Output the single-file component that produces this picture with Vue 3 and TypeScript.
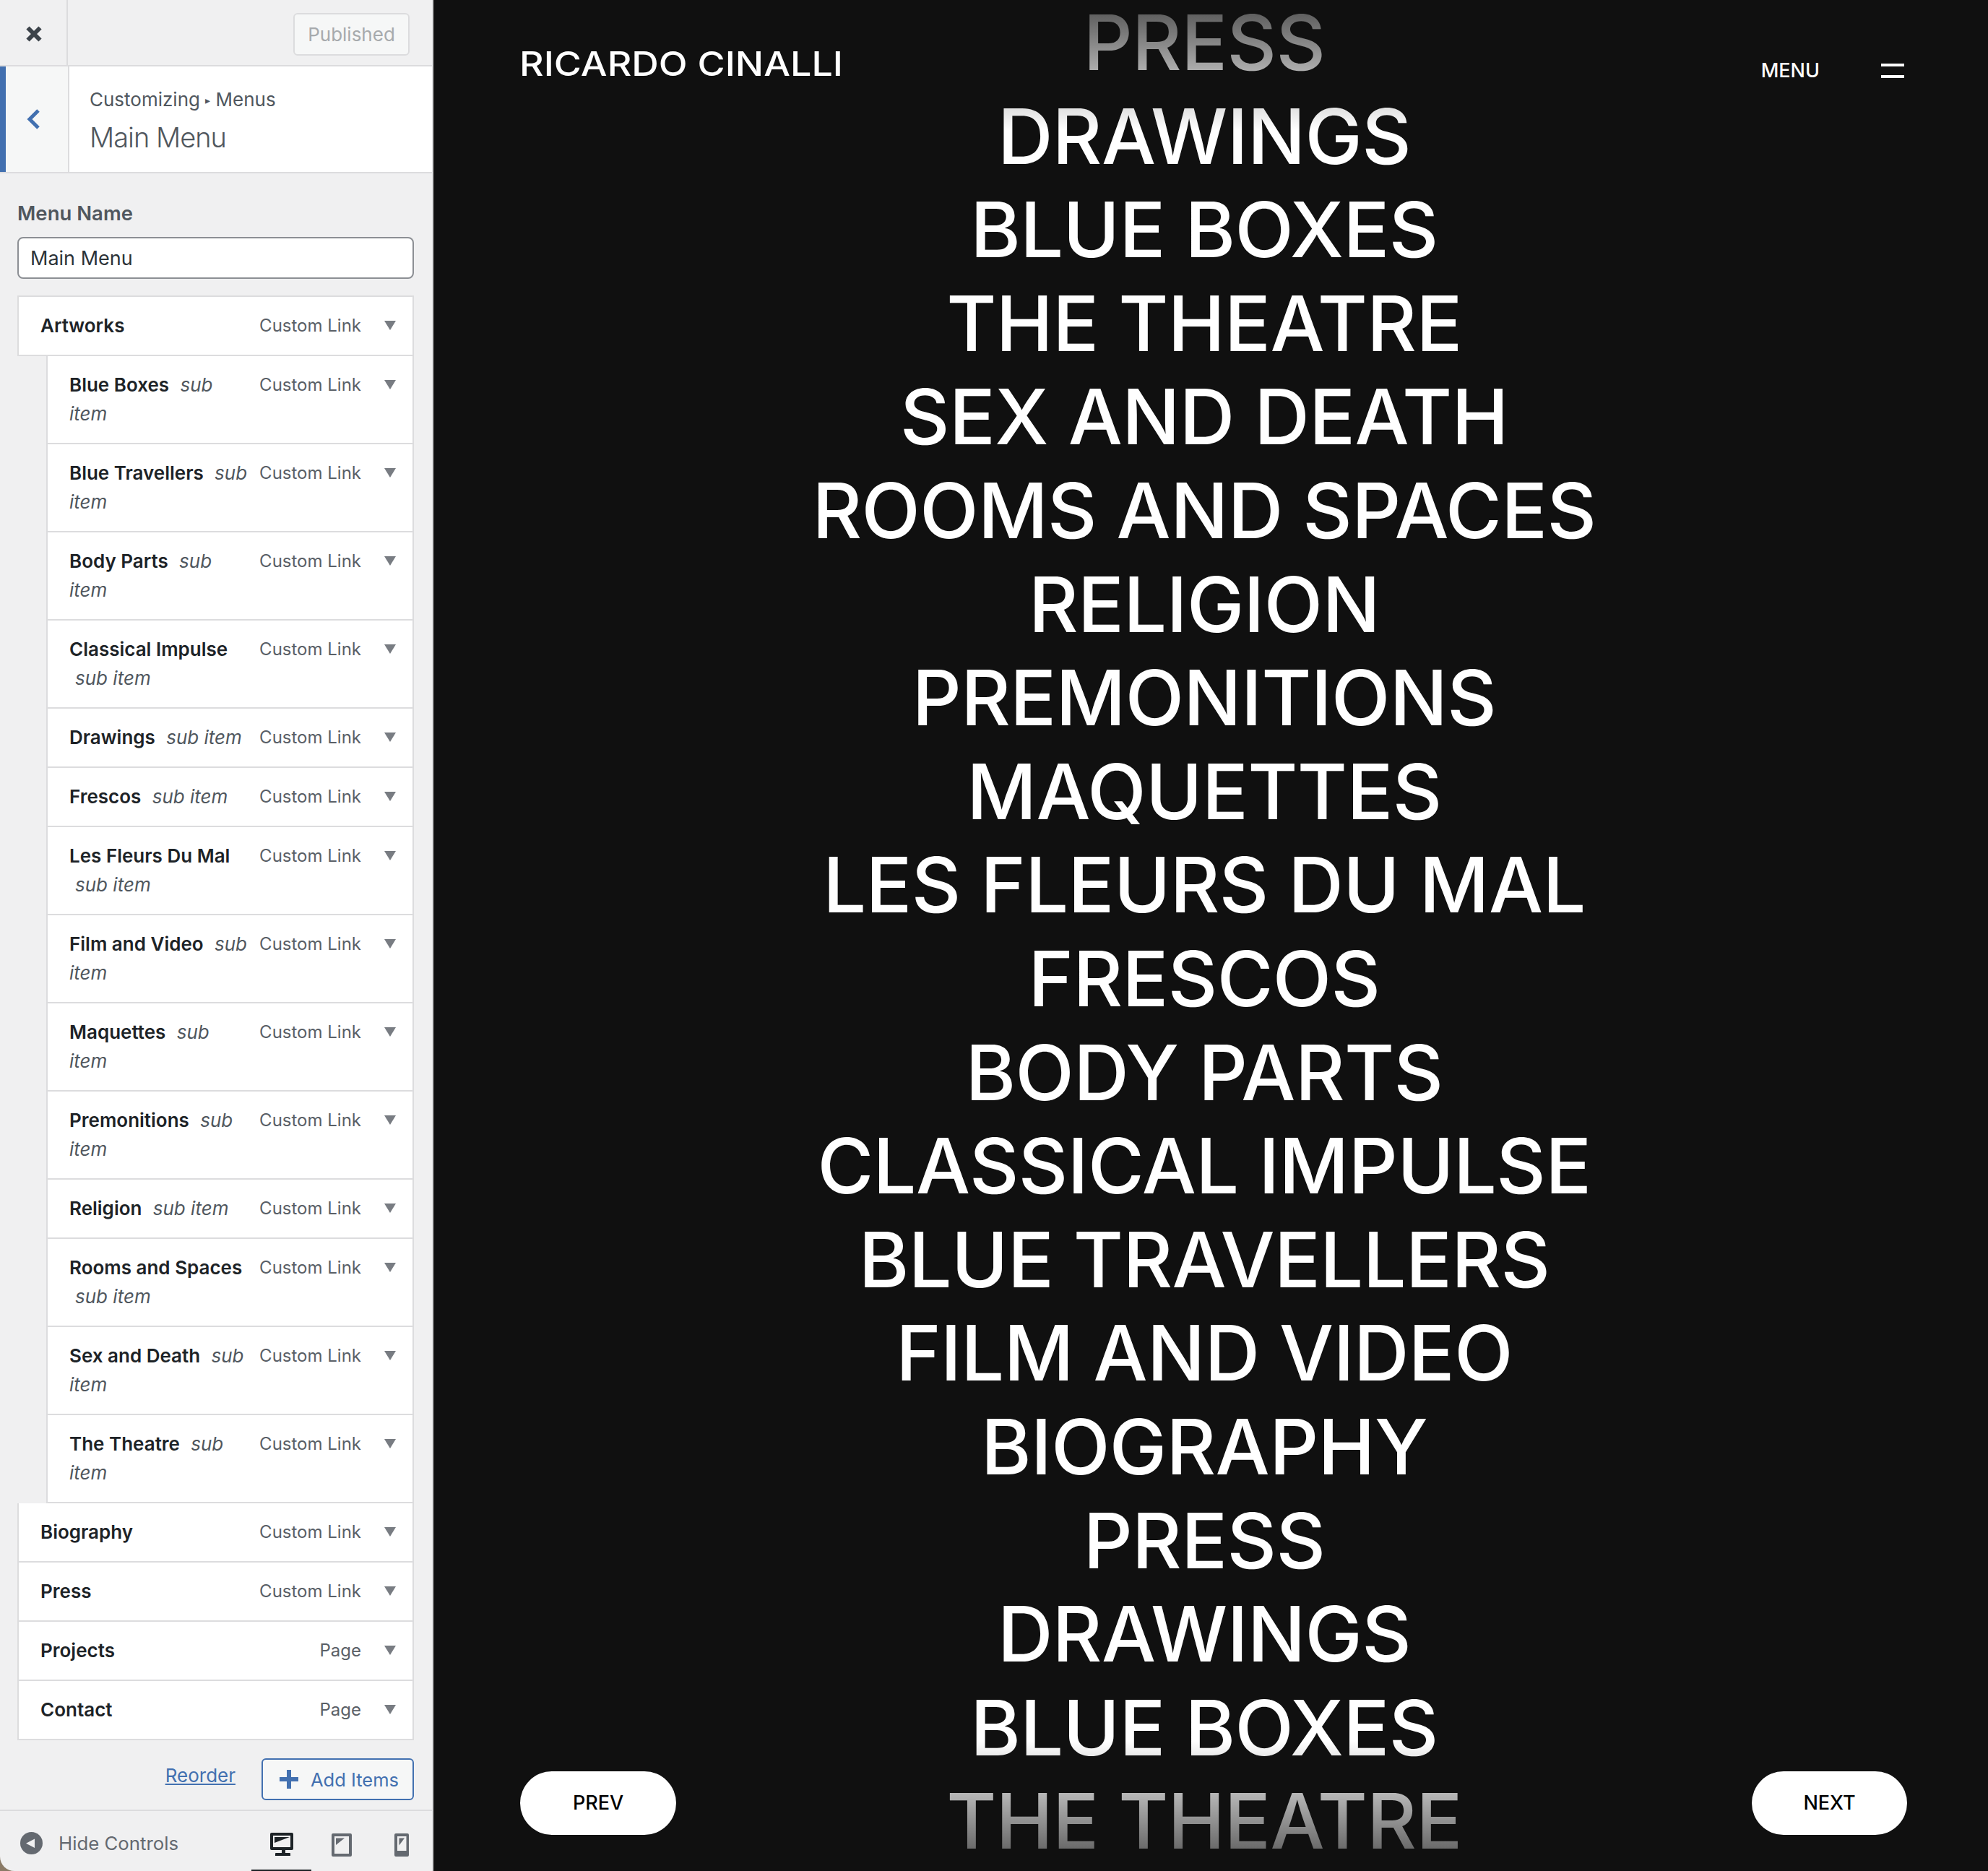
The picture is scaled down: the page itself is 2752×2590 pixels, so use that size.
<script setup lang="ts">
interface MenuItem {
  title: string
  type: string
  sub?: boolean
}

const items: MenuItem[] = [
  { title: 'Artworks', type: 'Custom Link' },
  { title: 'Blue Boxes', type: 'Custom Link', sub: true },
  { title: 'Blue Travellers', type: 'Custom Link', sub: true },
  { title: 'Body Parts', type: 'Custom Link', sub: true },
  { title: 'Classical Impulse', type: 'Custom Link', sub: true },
  { title: 'Drawings', type: 'Custom Link', sub: true },
  { title: 'Frescos', type: 'Custom Link', sub: true },
  { title: 'Les Fleurs Du Mal', type: 'Custom Link', sub: true },
  { title: 'Film and Video', type: 'Custom Link', sub: true },
  { title: 'Maquettes', type: 'Custom Link', sub: true },
  { title: 'Premonitions', type: 'Custom Link', sub: true },
  { title: 'Religion', type: 'Custom Link', sub: true },
  { title: 'Rooms and Spaces', type: 'Custom Link', sub: true },
  { title: 'Sex and Death', type: 'Custom Link', sub: true },
  { title: 'The Theatre', type: 'Custom Link', sub: true },
  { title: 'Biography', type: 'Custom Link' },
  { title: 'Press', type: 'Custom Link' },
  { title: 'Projects', type: 'Page' },
  { title: 'Contact', type: 'Page' },
]

const words: string[] = [
  'PRESS', 'DRAWINGS', 'BLUE BOXES', 'THE THEATRE', 'SEX AND DEATH', 'ROOMS AND SPACES',
  'RELIGION', 'PREMONITIONS', 'MAQUETTES', 'LES FLEURS DU MAL', 'FRESCOS', 'BODY PARTS',
  'CLASSICAL IMPULSE', 'BLUE TRAVELLERS', 'FILM AND VIDEO', 'BIOGRAPHY', 'PRESS', 'DRAWINGS',
  'BLUE BOXES', 'THE THEATRE',
]
</script>

<template>
  <div class="page">
    <aside class="panel">
      <div class="topbar">
        <div class="close">
          <svg width="24" height="24" viewBox="0 0 24 24"><path d="M3.500 3.500l17 17M20.500 3.500l-17 17" fill="none" stroke="#3c434a" stroke-width="6" /></svg>
        </div>
        <div class="published">Published</div>
      </div>
      <div class="head">
        <div class="back">
          <svg width="18" height="30" viewBox="0 0 18 30"><path d="M16 3L4 15l12 12" fill="none" stroke="#4270b0" stroke-width="5" /></svg>
        </div>
        <div class="head-text">
          <div class="crumb">Customizing <span class="sep">▸</span> Menus</div>
          <div class="head-title">Main Menu</div>
        </div>
      </div>
      <div class="body">
        <div class="label">Menu Name</div>
        <div class="input">Main Menu</div>
        <ul class="list">
          <li v-for="it in items" :key="it.title" class="row" :class="{ sub: it.sub }">
            <div class="row-title">
              <span class="name">{{ it.title }}</span>{{ ' ' }}<span v-if="it.sub" class="sub-label">sub item</span>
            </div>
            <span class="type">{{ it.type }}</span>
            <span class="arrow"></span>
          </li>
        </ul>
        <div class="actions">
          <a class="reorder">Reorder</a>
          <div class="add">
            <svg width="26" height="26" viewBox="0 0 26 26"><path d="M10 0h6v10h10v6H16v10h-6V16H0v-6h10z" fill="#4270b0" /></svg>
            <span>Add Items</span>
          </div>
        </div>
      </div>
      <div class="footer">
        <div class="hide">
          <svg width="31" height="31" viewBox="0 0 31 31"><circle cx="15.500" cy="15.500" r="15.500" fill="#646970" /><path d="M20 9.500v12.500L8 15.750z" fill="#f0f0f1" /></svg>
          <span>Hide Controls</span>
        </div>
        <div class="devices">
          <div class="device active">
            <svg width="32" height="32" viewBox="0 0 32 32"><path d="M2 0h28a2 2 0 0 1 2 2v20a2 2 0 0 1-2 2h-9v4h6a1 1 0 0 1 1 1v3H7v-3a1 1 0 0 1 1-1h8v-4H2a2 2 0 0 1-2-2V2a2 2 0 0 1 2-2zm2 4v16h24V4zm2 2h21L6 14z" fill="#1d2327" fill-rule="evenodd" /></svg>
          </div>
          <div class="device">
            <svg width="28" height="32" viewBox="0 0 28 32"><path d="M2 0h24a2 2 0 0 1 2 2v28a2 2 0 0 1-2 2H2a2 2 0 0 1-2-2V2a2 2 0 0 1 2-2zm2 4v24h20V4zm2 2.500h12L6 16z" fill="#646970" fill-rule="evenodd" /></svg>
          </div>
          <div class="device">
            <svg width="20" height="32" viewBox="0 0 20 32"><path d="M2 0h16a2 2 0 0 1 2 2v28a2 2 0 0 1-2 2H2a2 2 0 0 1-2-2V2a2 2 0 0 1 2-2zm2 4v20h12.500V4zm2.500 2.500H14l-7.500 10z" fill="#646970" fill-rule="evenodd" /></svg>
          </div>
        </div>
      </div>
    </aside>

    <main class="stage">
      <div class="words">
        <div v-for="(w, i) in words" :key="i" class="word">{{ w }}</div>
      </div>
      <div class="fade top"></div>
      <div class="fade bottom"></div>
      <div class="logo">RICARDO CINALLI</div>
      <div class="menu">
        <span>MENU</span>
        <div class="burger"><i></i><i></i></div>
      </div>
      <div class="pill prev">PREV</div>
      <div class="pill next">NEXT</div>
    </main>
  </div>
</template>

<style>
body { background: #8a7a66; }
</style>

<style scoped>
.page {
  display: flex; width: 2752px; height: 2590px; overflow: hidden;
  font-family: Inter, "Liberation Sans", sans-serif;
}
.panel {
  width: 600px; flex: none; display: flex; flex-direction: column;
  background: #f0f0f1; border-right: 2px solid #dcdcde; box-sizing: border-box;
  border-bottom-left-radius: 20px; overflow: hidden;
}
.topbar { height: 90px; flex: none; display: flex; align-items: center; border-bottom: 2px solid #dcdcde; }
.close { width: 94px; height: 90px; padding: 3px 0 0 2px; box-sizing: border-box; display: flex; align-items: center; justify-content: center; border-right: 2px solid #dcdcde; }
.published {
  margin: 4px 31px 0 auto; width: 161px; height: 59px; box-sizing: border-box;
  display: flex; align-items: center; justify-content: center;
  background: #f6f7f7; border: 2px solid #dcdcde; border-radius: 6px;
  font-size: 26px; color: #a7aaad;
}
.head { height: 146px; flex: none; display: flex; background: #fff; border-bottom: 2px solid #dcdcde; }
.back {
  width: 96px; flex: none; display: flex; align-items: center; justify-content: center; padding-right: 10px; box-sizing: border-box;
  border-left: 8px solid #4270b0; border-right: 2px solid #dcdcde; background: #f6f7f7;
}
.head-text { padding: 28px 0 0 28px; }
.crumb { font-size: 26px; line-height: 36px; color: #50575e; }
.sep { font-size: 14px; position: relative; top: -3px; }
.head-title { font-size: 38px; font-weight: 300; line-height: 48px; margin-top: 6px; color: #50575e; letter-spacing: -1px; }
.body { flex: 1; padding: 0 25px 0 24px; min-height: 0; }
.label { font-size: 27.500px; font-weight: 600; color: #50575e; line-height: 36px; margin-top: 37px; }
.input {
  height: 58px; box-sizing: border-box; margin-top: 15px; padding-left: 16px;
  display: flex; align-items: center;
  background: #fff; border: 2px solid #8c8f94; border-radius: 8px;
  font-size: 27px; color: #2c3338;
}
.list { list-style: none; margin: 23px 0 0; padding: 0; }
.row {
  display: flex; align-items: flex-start; box-sizing: border-box; min-height: 82px;
  background: #fff; border: 2px solid #dcdcde; border-top: none; padding: 20px 23px 20px 30px;
}
.row:first-child { border-top: 2px solid #dcdcde; min-height: 84px; }
.row.sub { margin-left: 40px; }
.row-title { flex: 1; min-width: 0; font-size: 26px; line-height: 40px; color: #1d2327; }
.name { font-weight: 600; }
.sub-label { font-style: italic; color: #50575e; margin-left: 8px; }
.type { flex: none; font-size: 24px; line-height: 40px; color: #5a6067; margin-left: 10px; }
.arrow {
  flex: none; width: 0; height: 0; margin: 13px 0 0 32px;
  border-left: 8px solid transparent; border-right: 8px solid transparent; border-top: 13px solid #787c82;
}
.actions { display: flex; justify-content: flex-end; align-items: flex-start; margin-top: 25px; gap: 36px; }
.reorder { font-size: 26px; color: #4270b0; text-decoration: underline; margin-top: 6px; line-height: 36px; }
.add {
  display: flex; align-items: center; gap: 17px; height: 58px; width: 211px; box-sizing: border-box; padding-left: 23px;
  background: #f6f7f7; border: 2px solid #4270b0; border-radius: 6px;
  font-size: 25.500px; color: #4270b0;
}
.footer { height: 83px; flex: none; display: flex; align-items: center; border-top: 2px solid #dcdcde; padding-left: 28px; }
.hide { display: flex; align-items: center; gap: 22px; margin-top: 5px; font-size: 25.800px; color: #646970; }
.devices { margin-left: auto; display: flex; align-items: center; height: 100%; margin-right: 1px; }
.device { display: flex; justify-content: center; align-items: center; width: 83px; height: 100%; padding-top: 10px; box-sizing: border-box; }
.device.active { border-bottom: 2px solid #1d2327; }
.stage { flex: 1; position: relative; overflow: hidden; background: #101010; }
.words { margin-top: -6px; padding-right: 18px; display: flex; flex-direction: column; align-items: center; }
.word { font-size: 106px; line-height: 129.600px; font-weight: 540; letter-spacing: -0.600px; color: #fff; white-space: nowrap; }
.fade { position: absolute; left: 0; right: 0; height: 180px; }
.fade.top { top: 0; background: linear-gradient(rgba(16,16,16,.75), rgba(16,16,16,0)); }
.fade.bottom { bottom: 0; background: linear-gradient(rgba(16,16,16,0), rgba(16,16,16,.75)); }
.logo { position: absolute; left: 119px; top: 60px; font-size: 46px; line-height: 56px; font-weight: 500; color: #fff; white-space: nowrap; transform: scaleX(1.13); transform-origin: left center; }
.menu { position: absolute; top: 80px; right: 116px; display: flex; align-items: center; gap: 85px; font-size: 27px; font-weight: 500; line-height: 36px; color: #fff; }
.burger { width: 32px; display: flex; flex-direction: column; gap: 12px; }
.burger i { display: block; height: 4px; background: #fff; }
.pill {
  position: absolute; bottom: 50px; height: 88px; width: 216px; padding-bottom: 2px; box-sizing: border-box;
  display: flex; align-items: center; justify-content: center;
  background: #fff; border-radius: 44px; font-size: 27px; font-weight: 500; color: #000;
}
.prev { left: 120px; }
.next { right: 112px; width: 215px; }
</style>
